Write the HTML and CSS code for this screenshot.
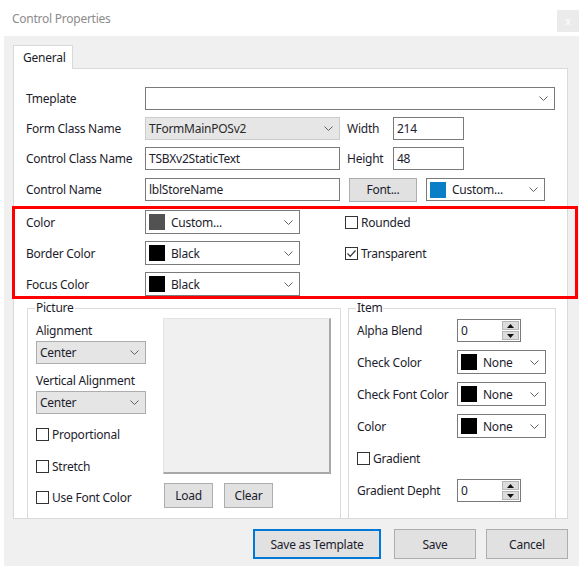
FILE: index.html
```html
<!DOCTYPE html>
<html>
<head>
<meta charset="utf-8">
<link rel="stylesheet" href="styles.css">
</head>
<body>
<div class="window">
  <div class="titlebar">
    <span class="title">Control Properties</span>
    <span class="close">x</span>
  </div>
  <div class="client">
    <div class="tab">General</div>
    <div class="panel">
      <div class="row r1">
        <span class="lbl">Tmeplate</span>
        <div class="combo w-tpl"><span class="val"></span><svg class="chev" width="9" height="5" viewBox="0 0 9 5"><path d="M0.5 0.5L4.5 4.5L8.5 0.5"/></svg></div>
      </div>
      <div class="row r2">
        <span class="lbl">Form Class Name</span>
        <div class="combo w-main disabled"><span class="val">TFormMainPOSv2</span><svg class="chev" width="9" height="5" viewBox="0 0 9 5"><path d="M0.5 0.5L4.5 4.5L8.5 0.5"/></svg></div>
        <span class="lbl-s">Width</span>
        <div class="input w-num">214</div>
      </div>
      <div class="row r3">
        <span class="lbl">Control Class Name</span>
        <div class="input w-main">TSBXv2StaticText</div>
        <span class="lbl-s">Height</span>
        <div class="input w-num">48</div>
      </div>
      <div class="row r4">
        <span class="lbl">Control Name</span>
        <div class="input w-main">lblStoreName</div>
        <div class="btn btn-font">Font...</div>
        <div class="combo color w-fc"><span class="sw sw-blue"></span><span class="val">Custom...</span><svg class="chev" width="9" height="5" viewBox="0 0 9 5"><path d="M0.5 0.5L4.5 4.5L8.5 0.5"/></svg></div>
      </div>
      <div class="row r5">
        <span class="lbl">Color</span>
        <div class="combo color w-col"><span class="sw sw-gray"></span><span class="val">Custom...</span><svg class="chev" width="9" height="5" viewBox="0 0 9 5"><path d="M0.5 0.5L4.5 4.5L8.5 0.5"/></svg></div>
        <label class="check ck-side"><span class="cb"></span><span>Rounded</span></label>
      </div>
      <div class="row r6">
        <span class="lbl">Border Color</span>
        <div class="combo color w-col"><span class="sw"></span><span class="val">Black</span><svg class="chev" width="9" height="5" viewBox="0 0 9 5"><path d="M0.5 0.5L4.5 4.5L8.5 0.5"/></svg></div>
        <label class="check ck-side"><span class="cb"><svg width="11" height="11" viewBox="0 0 11 11"><path d="M1.5 5.5L4.2 8.3L9.5 2.5"/></svg></span><span>Transparent</span></label>
      </div>
      <div class="row r7">
        <span class="lbl">Focus Color</span>
        <div class="combo color w-col"><span class="sw"></span><span class="val">Black</span><svg class="chev" width="9" height="5" viewBox="0 0 9 5"><path d="M0.5 0.5L4.5 4.5L8.5 0.5"/></svg></div>
      </div>

      <div class="groups">
        <fieldset class="group g-pic">
          <legend>Picture</legend>
          <div class="pic-body">
            <div class="pic-left">
              <div class="glabel gl-1">Alignment</div>
              <div class="combo gray w-al"><span class="val">Center</span><svg class="chev" width="9" height="5" viewBox="0 0 9 5"><path d="M0.5 0.5L4.5 4.5L8.5 0.5"/></svg></div>
              <div class="glabel gl-2">Vertical Alignment</div>
              <div class="combo gray w-al"><span class="val">Center</span><svg class="chev" width="9" height="5" viewBox="0 0 9 5"><path d="M0.5 0.5L4.5 4.5L8.5 0.5"/></svg></div>
              <label class="check ck-1"><span class="cb"></span><span>Proportional</span></label>
              <label class="check ck-2"><span class="cb"></span><span>Stretch</span></label>
              <label class="check ck-3"><span class="cb"></span><span>Use Font Color</span></label>
            </div>
            <div class="pic-right">
              <div class="picbox"></div>
              <div class="pic-btns">
                <div class="btn btn-sm">Load</div>
                <div class="btn btn-sm">Clear</div>
              </div>
            </div>
          </div>
        </fieldset>
        <fieldset class="group g-item">
          <legend>Item</legend>
          <div class="irow ir-1">
            <span class="ilbl">Alpha Blend</span>
            <div class="spin"><span class="val">0</span><span class="spin-btns"><span class="sb"><svg width="7" height="4" viewBox="0 0 7 4"><path d="M0 4L3.5 0L7 4Z"/></svg></span><span class="sb"><svg width="7" height="4" viewBox="0 0 7 4"><path d="M0 0L3.5 4L7 0Z"/></svg></span></span></div>
          </div>
          <div class="irow ir-2">
            <span class="ilbl">Check Color</span>
            <div class="combo color w-ic"><span class="sw"></span><span class="val">None</span><svg class="chev" width="9" height="5" viewBox="0 0 9 5"><path d="M0.5 0.5L4.5 4.5L8.5 0.5"/></svg></div>
          </div>
          <div class="irow ir-3">
            <span class="ilbl">Check Font Color</span>
            <div class="combo color w-ic"><span class="sw"></span><span class="val">None</span><svg class="chev" width="9" height="5" viewBox="0 0 9 5"><path d="M0.5 0.5L4.5 4.5L8.5 0.5"/></svg></div>
          </div>
          <div class="irow ir-4">
            <span class="ilbl">Color</span>
            <div class="combo color w-ic"><span class="sw"></span><span class="val">None</span><svg class="chev" width="9" height="5" viewBox="0 0 9 5"><path d="M0.5 0.5L4.5 4.5L8.5 0.5"/></svg></div>
          </div>
          <label class="check ir-5"><span class="cb"></span><span>Gradient</span></label>
          <div class="irow ir-6">
            <span class="ilbl">Gradient Depht</span>
            <div class="spin"><span class="val">0</span><span class="spin-btns"><span class="sb"><svg width="7" height="4" viewBox="0 0 7 4"><path d="M0 4L3.5 0L7 4Z"/></svg></span><span class="sb"><svg width="7" height="4" viewBox="0 0 7 4"><path d="M0 0L3.5 4L7 0Z"/></svg></span></span></div>
          </div>
        </fieldset>
      </div>
    </div>
    <div class="footer">
      <div class="btn btn-lg primary">Save as Template</div>
      <div class="btn btn-lg">Save</div>
      <div class="btn btn-lg">Cancel</div>
    </div>
  </div>
  <div class="highlight"></div>
</div>
</body>
</html>
```

FILE: styles.css
```css
* { box-sizing: border-box; margin: 0; padding: 0; }
html, body { width: 583px; height: 566px; overflow: hidden; background: #fff; }
body {
  font-family: "Noto Sans", "Open Sans", sans-serif;
  font-size: 12px;
  line-height: 16px;
  letter-spacing: -0.25px;
  color: #1c1c2c;
}
.window { position: relative; width: 583px; height: 566px; }

.titlebar {
  height: 36px;
  display: flex;
  justify-content: space-between;
  align-items: flex-start;
  padding: 0 4px 0 12px;
}
.title { color: #8c8c8c; margin-top: 11px; font-size: 12px; }
.close {
  width: 22px; height: 22px; margin-top: 10px;
  background: #ebebeb; color: #fff; font-size: 10px;
  display: flex; align-items: center; justify-content: center;
}

.client {
  margin: 0 4px;
  height: 530px;
  background: #f0f0f0;
  padding: 9px 11px 0 9px;
}
.tab {
  position: relative; z-index: 1;
  width: 60px; height: 24px;
  margin-bottom: -1px;
  background: #fff;
  border: 1px solid #d9d9d9; border-bottom: none;
  padding: 1px 0 0 9px; line-height: 22px;
}
.panel {
  height: 451px;
  background: #fff;
  border: 1px solid #d9d9d9;
  padding: 18px 0 0 12px;
  overflow: hidden;
}

.row { display: flex; align-items: center; }
.r1, .r2, .r3, .r4 { height: 23px; }
.r5, .r6, .r7 { height: 24px; }
.r2 { margin-top: 7px; }
.r3 { margin-top: 7px; }
.r4 { margin-top: 8px; }
.r5 { margin-top: 9px; }
.r6 { margin-top: 7px; }
.r7 { margin-top: 7px; }
.lbl { width: 119px; flex: none; padding-top: 1px; }
.lbl-s { width: 46px; flex: none; margin-left: 7px; padding-top: 1px; }

.combo {
  display: flex; align-items: center;
  height: 100%;
  border: 1px solid #7a7a7a;
  background: #fff;
  padding: 0 6px 0 3px;
  flex: none;
}
.combo .val { flex: 1; white-space: nowrap; padding-top: 1px; }
.chev { flex: none; }
.chev path { stroke: #606060; fill: none; stroke-width: 1; }
.combo.disabled { background: #e6e6e6; border-color: #cccccc; color: #2a2a2a; }
.combo.gray { background: #e5e5e5; border-color: #adadad; height: 23px; }

.input {
  height: 100%;
  border: 1px solid #7a7a7a;
  background: #fff;
  padding: 1px 3px 0;
  display: flex; align-items: center;
  flex: none;
}

.w-tpl { width: 410px; }
.w-main { width: 195px; }
.w-num { width: 71px; }
.w-fc { width: 119px; margin-left: 9px; }
.w-col { width: 155px; }
.w-al { width: 110px; }
.w-ic { width: 89px; height: 24px; }

.sw { width: 16px; height: 16px; background: #000; flex: none; margin-right: 6px; }
.sw-blue { background: #0a7fc8; }
.sw-gray { background: #525252; }

.btn {
  background: #e1e1e1;
  border: 1px solid #adadad;
  display: flex; align-items: center; justify-content: center;
  flex: none;
  padding-top: 1px;
}
.btn-font { width: 68px; height: 24px; margin-left: 9px; }

.check { display: flex; align-items: center; height: 16px; }
.check > span:last-child { padding-top: 1px; }
.cb {
  width: 13px; height: 13px;
  border: 1px solid #333;
  background: #fff;
  margin-right: 3px;
  flex: none;
  display: flex; align-items: center; justify-content: center;
}
.cb path { stroke: #333; fill: none; stroke-width: 1.2; }
.ck-side { margin-left: 45px; }

.groups { display: flex; gap: 7px; margin-top: 4px; margin-left: 1px; }
.group {
  border: 1px solid #dcdcdc;
  border-bottom: none;
  padding: 0 8px;
  height: 220px;
  min-width: 0;
}
.group legend { padding: 0 1px; margin-left: -1px; line-height: 16px; }
.g-pic { width: 314px; }
.g-item { width: 208px; }

.pic-body { display: flex; }
.pic-left { width: 110px; flex: none; }
.pic-right { margin-left: 17px; }
.glabel { line-height: 16px; }
.gl-1 { margin-top: 7px; margin-bottom: 2px; }
.gl-2 { margin-top: 9px; margin-bottom: 2px; }
.ck-1 { margin-top: 12px; }
.ck-2 { margin-top: 16px; }
.ck-3 { margin-top: 15px; }
.picbox {
  width: 168px; height: 156px;
  margin-top: 2px;
  background: #f0f0f0;
  border: 1px solid #e4e4e4;
  border-right: 2px solid #a8a8a8;
  border-bottom: 2px solid #a8a8a8;
}
.pic-btns { display: flex; gap: 11px; margin-top: 9px; margin-left: 1px; }
.btn-sm { width: 49px; height: 25px; }

.irow { display: flex; align-items: center; }
.ilbl { width: 100px; flex: none; white-space: nowrap; padding-top: 1px; }
.ir-1 { margin-top: 3px; height: 23px; }
.ir-2 { margin-top: 8px; height: 24px; }
.ir-3 { margin-top: 8px; height: 24px; }
.ir-4 { margin-top: 8px; height: 24px; }
.ir-5 { margin-top: 12px; }
.ir-6 { margin-top: 13px; height: 23px; }

.spin {
  width: 64px; height: 23px;
  border: 1px solid #7a7a7a;
  background: #fff;
  display: flex; align-items: center;
  padding: 0 1px 0 3px;
}
.spin .val { flex: 1; padding-top: 1px; }
.spin-btns { display: flex; flex-direction: column; gap: 1px; }
.sb {
  width: 17px; height: 9px;
  background: #dcdcdc;
  border: 1px solid #b5b5b5;
  display: flex; align-items: center; justify-content: center;
  padding: 0;
}
.sb path { fill: #111; }

.footer {
  display: flex; justify-content: flex-end;
  margin-top: 10px;
}
.btn-lg { height: 30px; margin-left: 10px; }
.primary { width: 128px; border: 2px solid #0078d7; margin-right: 3px; }
.footer .btn-lg:nth-child(2) { width: 82px; }
.footer .btn-lg:nth-child(3) { width: 82px; }

.highlight {
  position: absolute;
  left: 12px; top: 206px;
  width: 566px; height: 93px;
  border: 3px solid #ff0000;
  pointer-events: none;
}
```
